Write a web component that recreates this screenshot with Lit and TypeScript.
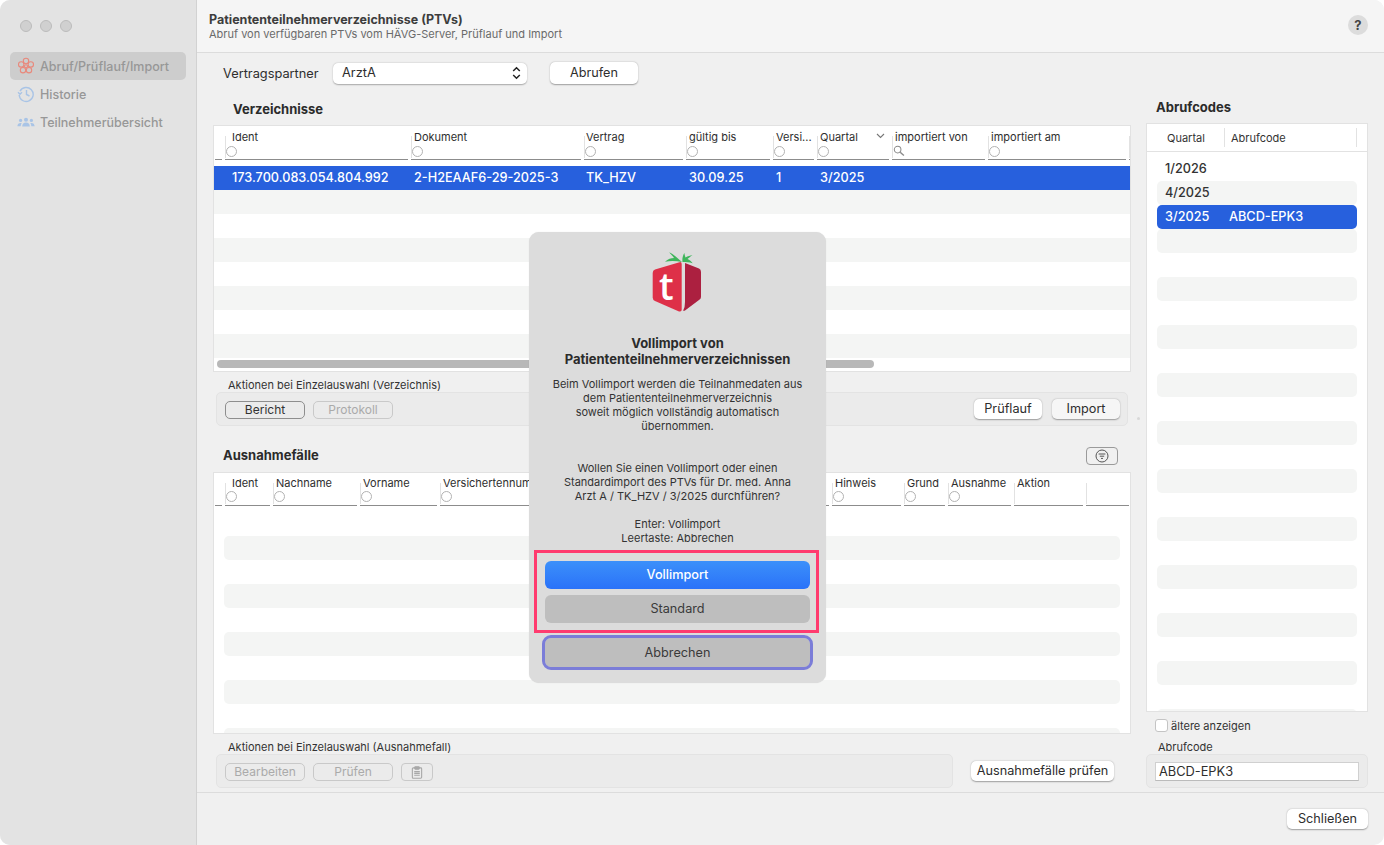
import { LitElement, html, css, svg } from "lit";
import { customElement } from "lit/decorators.js";

type Col = { w: number; label?: string; pad?: number; filter?: "circle" | "search" | "none"; sort?: boolean; val?: string };

const dirCols: Col[] = [
  { w: 7, filter: "none" },
  { w: 183, label: "Ident", pad: 7, val: "173.700.083.054.804.992" },
  { w: 170, label: "Dokument", val: "2-H2EAAF6-29-2025-3" },
  { w: 99, label: "Vertrag", pad: 2, val: "TK_HZV" },
  { w: 84, label: "gültig bis", val: "30.09.25" },
  { w: 41, label: "Versi...", val: "1" },
  { w: 72, label: "Quartal", sort: true, val: "3/2025" },
  { w: 93, label: "importiert von", filter: "search" },
  { w: 138, label: "importiert am" },
  { w: 10 },
];

const excCols: Col[] = [
  { w: 7, filter: "none" },
  { w: 45, label: "Ident", pad: 7 },
  { w: 84, label: "Nachname" },
  { w: 77, label: "Vorname" },
  { w: 389, label: "Versichertennummer" },
  { w: 69, label: "Hinweis" },
  { w: 41, label: "Grund" },
  { w: 63, label: "Ausnahme" },
  { w: 69, label: "Aktion", filter: "none" },
  { w: 43, filter: "none" },
];

const flower = svg`<svg class="ico" viewBox="0 0 18 18" fill="none" stroke="#e8897c" stroke-width="1.1">
  <circle cx="9" cy="4" r="2.7"/><circle cx="13.8" cy="7.4" r="2.7"/><circle cx="12" cy="13.2" r="2.7"/><circle cx="6" cy="13.2" r="2.7"/><circle cx="4.2" cy="7.4" r="2.7"/>
  <circle cx="9" cy="9.3" r="1.5"/></svg>`;
const clock = svg`<svg class="ico" viewBox="0 0 18 18" fill="none" stroke="#a9c4e6" stroke-width="1.4">
  <path d="M3 6.2A7 7 0 1 1 2.2 10"/><path d="M1 7.2l2 2 2-2" /><path d="M9.5 5v4.5l3 1.5"/></svg>`;
const people = svg`<svg class="ico" viewBox="0 0 18 18" fill="#a9c4e6">
  <circle cx="9" cy="6.8" r="2"/><path d="M5.2 13.5c0-2.4 1.6-3.9 3.8-3.9s3.8 1.5 3.8 3.9z"/>
  <circle cx="3.6" cy="7.4" r="1.6"/><path d="M0.4 13.2c0-2.1 1.3-3.3 3.2-3.3.5 0 .8.1 1.1.2-.7.8-1 1.9-1 3.1z"/>
  <circle cx="14.4" cy="7.4" r="1.6"/><path d="M17.6 13.2c0-2.1-1.3-3.3-3.2-3.3-.5 0-.8.1-1.1.2.7.8 1 1.9 1 3.1z"/></svg>`;
const search = svg`<svg class="mag" viewBox="0 0 13 13" fill="none" stroke="#8a8a8a" stroke-width="1.1"><circle cx="5" cy="5" r="3.6"/><path d="M7.8 7.8l4 3.6" stroke-width="1.5"/></svg>`;
const chevron = svg`<svg class="chev" viewBox="0 0 9 6" fill="none" stroke="#777" stroke-width="1.1"><path d="M1 1l3.5 3.5L8 1"/></svg>`;
const updown = svg`<svg class="updown" viewBox="0 0 9 14" fill="none" stroke="#222" stroke-width="1.5"><path d="M1.2 5L4.5 1.8 7.8 5M1.2 9l3.3 3.2L7.8 9"/></svg>`;
const filterIcon = svg`<svg class="filt" viewBox="0 0 14 14" fill="none" stroke="#555" stroke-width="1"><circle cx="7" cy="7" r="6"/><path d="M3.6 5h6.8M4.8 7.2h4.4M6 9.4h2"/></svg>`;
const clip = svg`<svg class="clip" viewBox="0 0 12 14" fill="none" stroke="#a8a8a8" stroke-width="1.2"><rect x="1" y="2" width="10" height="11.2" rx="1"/><rect x="3.6" y="0.8" width="4.8" height="2.6" rx=".6" fill="#a8a8a8"/><path d="M3 6h6M3 8h6M3 10h6"/></svg>`;
const logo = svg`<svg class="logo" viewBox="0 0 75 75">
  <path d="M42 17 C38 14 35 10 29.3 7.3 C31 10 33 11 34 13 C31 13 28 14 25 16.7 C31 15.5 37 16 42 17Z" fill="#3eb55b"/>
  <path d="M42.5 17 C42 13 43 10 44.5 8 C44.5 10 45 11 45.5 12.5 C48 11 50 10.5 52.5 10 C50 12 48.5 13 47.5 14 C49.5 15 51.5 16.5 52.7 18.3 C49 17 46 17 42.5 17Z" fill="#3eb55b"/>
  <path d="M12.7 28 Q12.7 25.4 15 24.6 L39.5 17.2 Q41.7 16.6 41.7 19 L41.7 64.5 Q41.7 67.2 39 66.4 L15 56 Q12.7 55 12.7 52.5Z" fill="#de3048"/>
  <path d="M45 18 L59 23.6 Q61 24.5 61 27 L61 52 Q61 54.2 59 55 L45 65.5 Q43 66.6 43.4 65 Q45 62 45 57 L45 18Z" fill="#ac2040"/>
  <text x="26.3" y="54.5" text-anchor="middle" font-family="'Open Sans',sans-serif" font-weight="600" font-size="37" fill="#fff">t</text>
</svg>`;

@customElement("app-root")
export class AppRoot extends LitElement {
  static styles = css`
    :host { display: block; position: relative; width: 1384px; height: 845px; background: #fff; font-family: Inter, "Liberation Sans", sans-serif; font-size: 12px; color: #2e2e2e; overflow: hidden; }
    * { box-sizing: border-box; }
    .win { display: flex; width: 100%; height: 100%; border-radius: 10px; overflow: hidden; background: #f0f0f0; }
    .side { width: 197px; flex: none; background: #e3e3e3; border-right: 1px solid #d2d2d2; padding: 0 10px; }
    .lights { display: flex; gap: 8px; padding: 20px 10px 0; height: 52px; }
    .lights i { width: 12px; height: 12px; border-radius: 50%; background: #d0d0d0; border: 1px solid #bcbcbc; }
    .nav { display: flex; align-items: center; height: 28px; padding-left: 7px; gap: 5px; border-radius: 5px; color: #979797; font-size: 12.5px; font-weight: 500; }
    .nav.on { background: #cdcdcd; }
    .ico { width: 18px; height: 18px; flex: none; }
    .main { flex: 1; display: flex; flex-direction: column; min-width: 0; }
    .head { height: 53px; flex: none; background: #f5f5f5; border-bottom: 1px solid #dcdcdc; padding: 13px 16px 0 12px; display: flex; justify-content: space-between; }
    .head h1 { margin: 0; font-size: 12.5px; line-height: 14px; font-weight: 700; color: #3d3d3d; }
    .head p { margin: 0; font-size: 11px; line-height: 14px; color: #6a6a6a; }
    .help { width: 20px; height: 20px; margin-top: 2px; border-radius: 50%; background: #dcdcdc; display: flex; align-items: center; justify-content: center; font-weight: 700; font-size: 13px; color: #444; }
    .body { flex: 1; display: flex; padding-left: 16px; min-height: 0; }
    .left { width: 918px; flex: none; display: flex; flex-direction: column; }
    .gut { width: 15px; flex: none; display: flex; align-items: center; justify-content: center; }
    .gut i { width: 3px; height: 3px; border-radius: 50%; background: #d8d8d8; margin-top: -8px; }
    .right { width: 222px; flex: none; display: flex; flex-direction: column; }
    .tool { display: flex; align-items: center; margin-top: 9px; height: 22px; padding-left: 10px; font-size: 12.8px; }
    .tool label { width: 110px; flex: none; }
    .select { width: 194px; height: 21px; border-radius: 5px; background: #fff; box-shadow: 0 0.5px 1.5px rgba(0,0,0,.3); display: flex; align-items: center; justify-content: space-between; padding: 0 6px 1px 9px; margin-right: 23px; }
    .updown { width: 9px; height: 14px; }
    .btn { display: inline-flex; align-items: center; justify-content: center; height: 20px; padding-bottom: 1px; border-radius: 5px; background: #fff; box-shadow: 0 0.5px 1.5px rgba(0,0,0,.35); font-size: 12.7px; color: #2e2e2e; flex: none; }
    .btn.lg { height: 22px; width: 88px; }
    .btn.soft { background: #f6f6f6; }
    .btn.out { height: 18px; width: 80px; background: transparent; box-shadow: none; border: 1px solid #8e8e8e; font-size: 12px; color: #333; }
    .btn.dis { height: 18px; width: 80px; background: transparent; box-shadow: none; border: 1px solid #c9c9c9; font-size: 12px; color: #aaa; }
    h2 { margin: 0; font-size: 13px; line-height: 16px; font-weight: 700; color: #2b2b2b; }
    .t1 { margin: 17px 0 8px 20px; }
    .table { background: #fff; border: 1px solid #e2e2e2; overflow: hidden; position: relative; flex: none; }
    .tbl1 { height: 247px; }
    .tbl2 { height: 262px; }
    .hdr { display: flex; gap: 3px; padding-left: 1px; height: 34px; white-space: nowrap; }
    .tbl2 .hdr { height: 33px; }
    .hc { flex: none; position: relative; border-bottom: 1.5px solid #8c8c8c; overflow: hidden; padding-top: 4px; font-size: 11px; line-height: 14px; color: #2e2e2e; }
    .hc .sep { position: absolute; left: 0; top: 10px; bottom: 1px; width: 1px; background: #e2e2e2; }
    .hc .lab { display: block; height: 14px; }
    .tbl2 .hc { padding-top: 3px; }
    .circle { position: absolute; left: 1px; top: 20px; width: 11px; height: 11px; border-radius: 50%; border: 1px solid #b2b2b2; background: #fff; }
    .tbl2 .circle { top: 18px; }
    .mag { position: absolute; left: 1px; top: 19px; width: 12px; height: 12px; }
    .chev { position: absolute; right: 4px; top: 7px; width: 9px; height: 6px; }
    .rows { padding-top: 6px; }
    .row { display: flex; gap: 3px; padding-left: 1px; padding-bottom: 2px; height: 24px; align-items: center; font-size: 12.7px; font-weight: 500; white-space: nowrap; }
    .row.sel { background: #2760dd; color: #fff; }
    .row.alt { background: #f4f5f4; }
    .bar { position: absolute; left: 3px; bottom: 3px; width: 657px; height: 8px; border-radius: 4px; background: #b8b8b8; }
    .cap { margin: 7px 0 1px 15px; font-size: 11px; line-height: 12px; color: #333; }
    .group { height: 34px; background: #ebebeb; border: 1px solid #e3e3e3; border-radius: 5px; display: flex; align-items: flex-end; padding: 0 7px 6px 8px; gap: 8px; flex: none; }
    .g1 { margin: 0 3px; }
    .g1 .sp { flex: 1; }
    .g1 .btn.pair { width: 68px; }
    .g1 .btn.pair + .btn.pair { margin-left: 2px; }
    .exh { display: flex; align-items: center; justify-content: space-between; height: 18px; margin: 21px 13px 7px 10px; }
    .exh h2 { padding-bottom: 2px; line-height: 16px; }
    .fbtn { width: 32px; height: 18px; border: 1px solid #9a9a9a; border-radius: 4px; display: flex; align-items: center; justify-content: center; }
    .filt { width: 14px; height: 14px; }
    .stripes { padding: 30px 10px 0; }
    .stripes i { display: block; height: 24px; border-radius: 5px; background: #f4f5f4; margin-bottom: 24px; }
    .lastrow { display: flex; align-items: center; margin: 0 0 0 3px; }
    .g2 { width: 737px; }
    .ap { width: 143px; margin-left: 18px; }
    .clipb { width: 32px; height: 18px; border: 1px solid #c9c9c9; border-radius: 4px; display: flex; align-items: center; justify-content: center; }
    .clip { width: 12px; height: 13px; }
    .t2 { margin: 46px 0 8px 10px; }
    .panel { height: 589px; background: #fff; border: 1px solid #e2e2e2; overflow: hidden; flex: none; }
    .phead { height: 28px; border-bottom: 1px solid #e2e2e2; display: flex; align-items: center; font-size: 11px; color: #333; padding-left: 20px; }
    .phead span { display: block; line-height: 18px; padding-top: 1px; }
    .phead span:first-child { width: 57px; }
    .phead span:last-child { border-left: 1px solid #e2e2e2; border-right: 1px solid #e2e2e2; padding-left: 6px; width: 133px; }
    .plist { padding: 5px 10px 0; }
    .prow { height: 24px; border-radius: 5px; display: flex; align-items: center; padding: 0 0 2px 8px; font-size: 12.7px; color: #333; white-space: nowrap; }
    .prow b { font-weight: 500; }
    .prow b.q { width: 64px; }
    .prow.alt { background: #f4f5f4; }
    .prow.sel { background: #2760dd; color: #fff; }
    .chk { display: flex; align-items: center; gap: 3px; margin: 7px 0 0 9px; height: 13px; font-size: 11px; color: #333; }
    .chk i { width: 13px; height: 13px; background: #fff; border: 1px solid #c4c4c4; border-radius: 3px; }
    .cap2 { margin: 9px 0 1px 12px; font-size: 11px; line-height: 12px; color: #333; }
    .g3 { padding: 7px 8px 6px; background: #ebebeb; height: 34px; border: 1px solid #e3e3e3; border-radius: 5px; }
    .inp { height: 19px; background: #fff; border: 1px solid #d0d0d0; border-bottom-color: #bbb; font-size: 12.8px; line-height: 17px; padding-left: 3px; color: #2e2e2e; }
    .foot { height: 53px; flex: none; border-top: 1px solid #dcdcdc; display: flex; justify-content: flex-end; padding: 16px 16px 0 0; }
    .foot .btn { width: 81px; }
    .alert { position: absolute; left: 529px; top: 232px; width: 297px; height: 451px; background: #dcdcdc; border-radius: 10px; display: flex; flex-direction: column; align-items: center; padding-top: 13px; box-shadow: 0 0 1px rgba(0,0,0,.15); }
    .logo { width: 75px; height: 75px; flex: none; }
    .alert h3 { margin: 15px 0 0; font-size: 13px; line-height: 16px; font-weight: 700; text-align: center; color: #2b2b2b; }
    .alert p { margin: 10px 0 0; font-size: 11px; line-height: 14px; text-align: center; color: #333; white-space: nowrap; }
    .abtn { width: 265px; border-radius: 6px; display: flex; align-items: center; justify-content: center; padding-bottom: 2px; font-size: 12.7px; flex: none; }
    .abtn.pri { height: 28px; margin-top: 16px; background: linear-gradient(#3c90fa, #2a72f9); color: #fff; font-weight: 500; }
    .abtn.sec { height: 28px; margin-top: 6px; background: #bebebe; color: #3a3a3a; }
    .abtn.foc { height: 29px; margin-top: 15px; padding-bottom: 0; background: #bebebe; color: #3a3a3a; outline: 3px solid #7b7dd8; outline-offset: 0; }
    .mark { position: absolute; left: 534px; top: 550px; width: 285px; height: 83px; border: 3px solid #ff3b6f; pointer-events: none; }
  `;

  private header(cols: Col[]) {
    return html`<div class="hdr">${cols.map((c, i) => html`
      <div class="hc" style="width:${c.w}px;padding-left:${c.pad ?? 3}px">
        ${i > 0 ? html`<span class="sep"></span>` : ""}
        ${c.label ? html`<span class="lab">${c.label}</span>` : ""}
        ${c.sort ? chevron : ""}
        ${c.filter === "search" ? search : c.filter === "none" || !c.label ? "" : html`<span class="circle"></span>`}
      </div>`)}</div>`;
  }

  render() {
    const alts = [0, 1, 2, 3, 4, 5, 6, 7];
    const codes = Array.from({ length: 26 }, (_, i) => i);
    return html`
      <div class="win">
        <aside class="side">
          <div class="lights"><i></i><i></i><i></i></div>
          <div class="nav on">${flower}<span>Abruf/Prüflauf/Import</span></div>
          <div class="nav">${clock}<span>Historie</span></div>
          <div class="nav">${people}<span>Teilnehmerübersicht</span></div>
        </aside>
        <main class="main">
          <header class="head">
            <div><h1>Patiententeilnehmerverzeichnisse (PTVs)</h1><p>Abruf von verfügbaren PTVs vom HÄVG-Server, Prüflauf und Import</p></div>
            <div class="help">?</div>
          </header>
          <div class="body">
            <section class="left">
              <div class="tool">
                <label>Vertragspartner</label>
                <div class="select"><span>ArztA</span>${updown}</div>
                <span class="btn lg">Abrufen</span>
              </div>
              <h2 class="t1">Verzeichnisse</h2>
              <div class="table tbl1">
                ${this.header(dirCols)}
                <div class="rows">
                  ${alts.map((i) => html`<div class="row ${i === 0 ? "sel" : i % 2 ? "alt" : ""}">
                    ${i === 0 ? dirCols.map((c) => html`<span style="width:${c.w}px;flex:none;padding-left:${c.pad ?? 3}px">${c.val ?? ""}</span>`) : ""}
                  </div>`)}
                </div>
                <div class="bar"></div>
              </div>
              <div class="cap">Aktionen bei Einzelauswahl (Verzeichnis)</div>
              <div class="group g1">
                <span class="btn out">Bericht</span>
                <span class="btn dis">Protokoll</span>
                <span class="sp"></span>
                <span class="btn pair">Prüflauf</span>
                <span class="btn pair soft">Import</span>
              </div>
              <div class="exh"><h2>Ausnahmefälle</h2><div class="fbtn">${filterIcon}</div></div>
              <div class="table tbl2">
                ${this.header(excCols)}
                <div class="rows stripes"><i></i><i></i><i></i><i></i><i></i></div>
              </div>
              <div class="cap">Aktionen bei Einzelauswahl (Ausnahmefall)</div>
              <div class="lastrow">
                <div class="group g2">
                  <span class="btn dis">Bearbeiten</span>
                  <span class="btn dis">Prüfen</span>
                  <span class="clipb">${clip}</span>
                </div>
                <span class="btn ap">Ausnahmefälle prüfen</span>
              </div>
            </section>
            <div class="gut"><i></i></div>
            <section class="right">
              <h2 class="t2">Abrufcodes</h2>
              <div class="panel">
                <div class="phead"><span>Quartal</span><span>Abrufcode</span></div>
                <div class="plist">
                  ${codes.map((i) => html`<div class="prow ${i === 2 ? "sel" : i % 2 ? "alt" : ""}">
                    ${i === 0 ? html`<b class="q">1/2026</b>` : i === 1 ? html`<b class="q">4/2025</b>` : i === 2 ? html`<b class="q">3/2025</b><b>ABCD-EPK3</b>` : ""}
                  </div>`)}
                </div>
              </div>
              <div class="chk"><i></i><span>ältere anzeigen</span></div>
              <div class="cap2">Abrufcode</div>
              <div class="g3"><div class="inp">ABCD-EPK3</div></div>
            </section>
          </div>
          <footer class="foot"><span class="btn">Schließen</span></footer>
        </main>
      </div>
      <div class="alert" role="dialog">
        ${logo}
        <h3>Vollimport von<br />Patiententeilnehmerverzeichnissen</h3>
        <p>
          Beim Vollimport werden die Teilnahmedaten aus<br />
          dem Patiententeilnehmerverzeichnis<br />
          soweit möglich vollständig automatisch<br />
          übernommen.<br /><br /><br />
          Wollen Sie einen Vollimport oder einen<br />
          Standardimport des PTVs für Dr. med. Anna<br />
          Arzt A / TK_HZV / 3/2025 durchführen?<br /><br />
          Enter: Vollimport<br />
          Leertaste: Abbrechen
        </p>
        <div class="abtn pri">Vollimport</div>
        <div class="abtn sec">Standard</div>
        <div class="abtn foc">Abbrechen</div>
      </div>
      <div class="mark"></div>
    `;
  }
}
